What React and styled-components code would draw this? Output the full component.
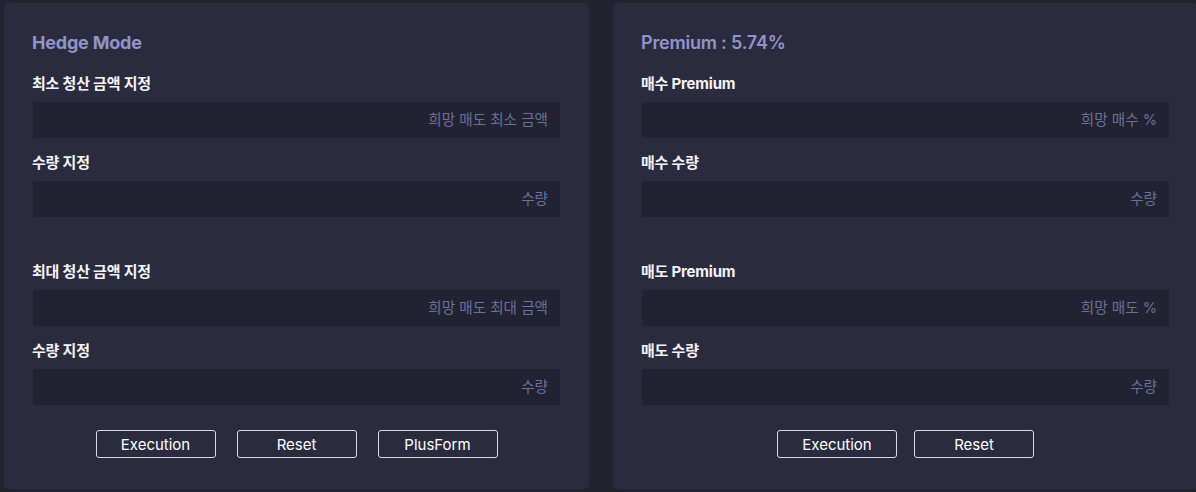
import React from "react";
import styled, { createGlobalStyle } from "styled-components";

const Global = createGlobalStyle`
  html, body { margin: 0; padding: 0; background: #232330; overflow: hidden; }
  * { box-sizing: border-box; }
  body { font-family: Inter, "Noto Sans CJK KR", sans-serif; }
`;

const Page = styled.div`
  display: flex;
  gap: 24px;
  padding: 3px 0 0 4px;
  width: 1196px;
  height: 492px;
  overflow: hidden;
`;

const Panel = styled.section`
  flex: 0 0 585px;
  width: 585px;
  height: 486px;
  background: #2b2b3f;
  border-radius: 5px;
  padding: 28px 29px 31px 29px;
  display: flex;
  flex-direction: column;
`;

const Title = styled.h2`
  margin: 0 0 19px -1px;
  font-size: 18px;
  line-height: 24px;
  font-weight: ${(p) => p.$weight || 700};
  color: #9393cc;
  letter-spacing: -0.2px;
`;

const Section = styled.div`
  display: flex;
  flex-direction: column;
  gap: 15px;
  margin-top: ${(p) => p.$top || 0}px;
`;

const Field = styled.div`
  display: flex;
  flex-direction: column;
  gap: 8px;
`;

const Label = styled.label`
  font-size: 15px;
  line-height: 20px;
  font-weight: 700;
  color: #f4f4f8;
  margin-left: -1px;
  letter-spacing: -0.2px;
`;

const Input = styled.input`
  height: 36px;
  width: 100%;
  border: none;
  outline: none;
  background: #222232;
  color: #e0e0ee;
  text-align: right;
  padding: 0 12px;
  font-family: Inter, "Noto Sans CJK KR", sans-serif;
  font-size: 14.6px;
  &::placeholder { color: #6a7098; }
`;

const Buttons = styled.div`
  display: flex;
  justify-content: center;
  gap: ${(p) => p.$gap}px;
  margin-top: 25px;
`;

const Button = styled.button`
  width: 120px;
  height: 28px;
  background: transparent;
  border: 1px solid #d9d9e2;
  border-radius: 3px;
  color: #ffffff;
  font-family: Inter, "Noto Sans CJK KR", sans-serif;
  font-size: 15px;
  font-weight: 400;
  padding: 0;
  cursor: pointer;
`;

const F = ({ label, placeholder }) => (
  <Field>
    <Label>{label}</Label>
    <Input placeholder={placeholder} />
  </Field>
);

export default function App() {
  return (
    <>
      <Global />
      <Page>
        <Panel>
          <Title>Hedge Mode</Title>
          <Section>
            <F label="최소 청산 금액 지정" placeholder="희망 매도 최소 금액" />
            <F label="수량 지정" placeholder="수량" />
          </Section>
          <Section $top={45}>
            <F label="최대 청산 금액 지정" placeholder="희망 매도 최대 금액" />
            <F label="수량 지정" placeholder="수량" />
          </Section>
          <Buttons $gap={21}>
            <Button>Execution</Button>
            <Button>Reset</Button>
            <Button>PlusForm</Button>
          </Buttons>
        </Panel>
        <Panel>
          <Title $weight={600}>Premium : 5.74%</Title>
          <Section>
            <F label="매수 Premium" placeholder="희망 매수 %" />
            <F label="매수 수량" placeholder="수량" />
          </Section>
          <Section $top={45}>
            <F label="매도 Premium" placeholder="희망 매도 %" />
            <F label="매도 수량" placeholder="수량" />
          </Section>
          <Buttons $gap={17}>
            <Button>Execution</Button>
            <Button>Reset</Button>
          </Buttons>
        </Panel>
      </Page>
    </>
  );
}
